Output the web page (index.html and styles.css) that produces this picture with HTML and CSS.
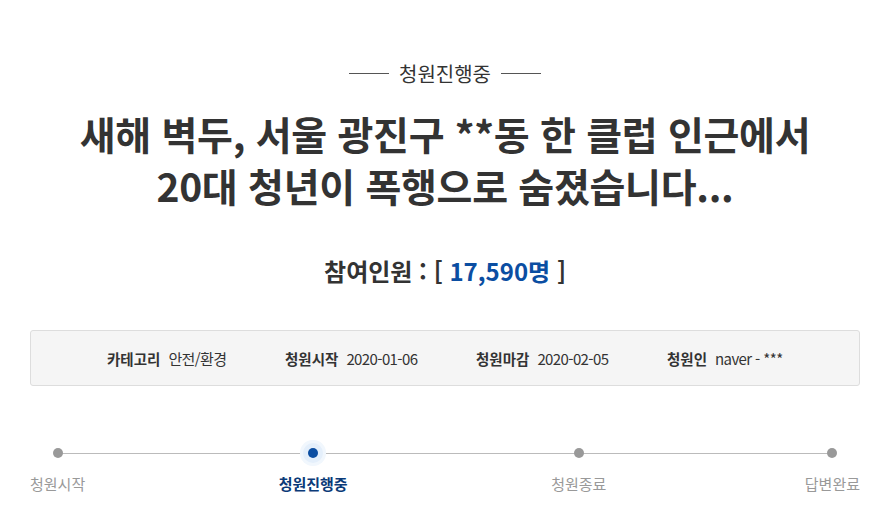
FILE: index.html
```html
<!DOCTYPE html>
<html lang="ko">
<head>
<meta charset="utf-8">
<link rel="stylesheet" href="styles.css">
</head>
<body>
<div class="page">
  <div class="status"><span class="rule"></span><span class="status-text">청원진행중</span><span class="rule"></span></div>
  <h1 class="title">새해 벽두, 서울 광진구 **동 한 클럽 인근에서<br>20대 청년이 폭행으로 숨졌습니다...</h1>
  <div class="count">참여인원 : [ <span class="num">17,590명</span> ]</div>
  <ul class="meta">
    <li><strong>카테고리</strong><span>안전/환경</span></li>
    <li><strong>청원시작</strong><span>2020-01-06</span></li>
    <li><strong>청원마감</strong><span>2020-02-05</span></li>
    <li><strong>청원인</strong><span>naver - ***</span></li>
  </ul>
  <div class="progress">
    <div class="track"></div>
    <div class="step"><span class="dot"></span><span class="label">청원시작</span></div>
    <div class="step active"><span class="dot"></span><span class="label">청원진행중</span></div>
    <div class="step"><span class="dot"></span><span class="label">청원종료</span></div>
    <div class="step"><span class="dot"></span><span class="label">답변완료</span></div>
  </div>
</div>
</body>
</html>
```
FILE: styles.css
```css
* { box-sizing: border-box; }
html, body { margin: 0; padding: 0; background: #fff; }
body {
  font-family: "Noto Sans CJK KR", "Noto Sans", sans-serif;
  color: #333;
}
.page { padding: 60px 25px 0 30px; }
.status {
  display: flex;
  justify-content: center;
  align-items: center;
  gap: 10px;
  height: 26px;
}
.rule { width: 40px; height: 1px; background: #555; }
.status-text { font-size: 20px; color: #333; }
.title {
  margin: 21px 0 0;
  text-align: center;
  font-size: 39px;
  line-height: 52px;
  font-weight: 700;
  color: #333;
  letter-spacing: -0.3px;
}
.count {
  margin-top: 44px;
  text-align: center;
  font-size: 24px;
  font-weight: 700;
  line-height: 32px;
  color: #333;
}
.count .num { color: #0b4ea2; }
.meta {
  list-style: none;
  margin: 43px 0 0;
  padding: 0 0 0 76px;
  height: 56px;
  display: flex;
  align-items: center;
  background: #f5f5f5;
  border: 1px solid #ddd;
  border-radius: 3px;
  font-size: 15px;
}
.meta li { display: flex; gap: 8px; }
.meta li:nth-child(1) { width: 178px; }
.meta li:nth-child(2) { width: 191px; }
.meta li:nth-child(3) { width: 191px; }
.meta strong { font-weight: 700; color: #333; font-size: 14.5px; }
.meta span { color: #333; letter-spacing: -0.6px; }
.progress {
  position: relative;
  margin-top: 55px;
  display: flex;
  justify-content: space-between;
}
.track {
  position: absolute;
  left: 26px;
  right: 27px;
  top: 12px;
  height: 1px;
  background: #bbb;
}
.step {
  position: relative;
  display: flex;
  flex-direction: column;
  align-items: center;
}
.step.active { margin-left: -5px; margin-right: 5px; }
.dot {
  width: 10px;
  height: 10px;
  margin: 7px 0;
  border-radius: 50%;
  background: #999;
  position: relative;
}
.active .dot { background: #0b4ea2; box-shadow: 0 0 0 5px #e4effb, 0 0 0 8px #f1f7fd; }
.label {
  margin-top: 9px;
  font-size: 15px;
  color: #999;
  line-height: 20px;
}
.active .label { color: #0b3a78; font-weight: 700; }
```
